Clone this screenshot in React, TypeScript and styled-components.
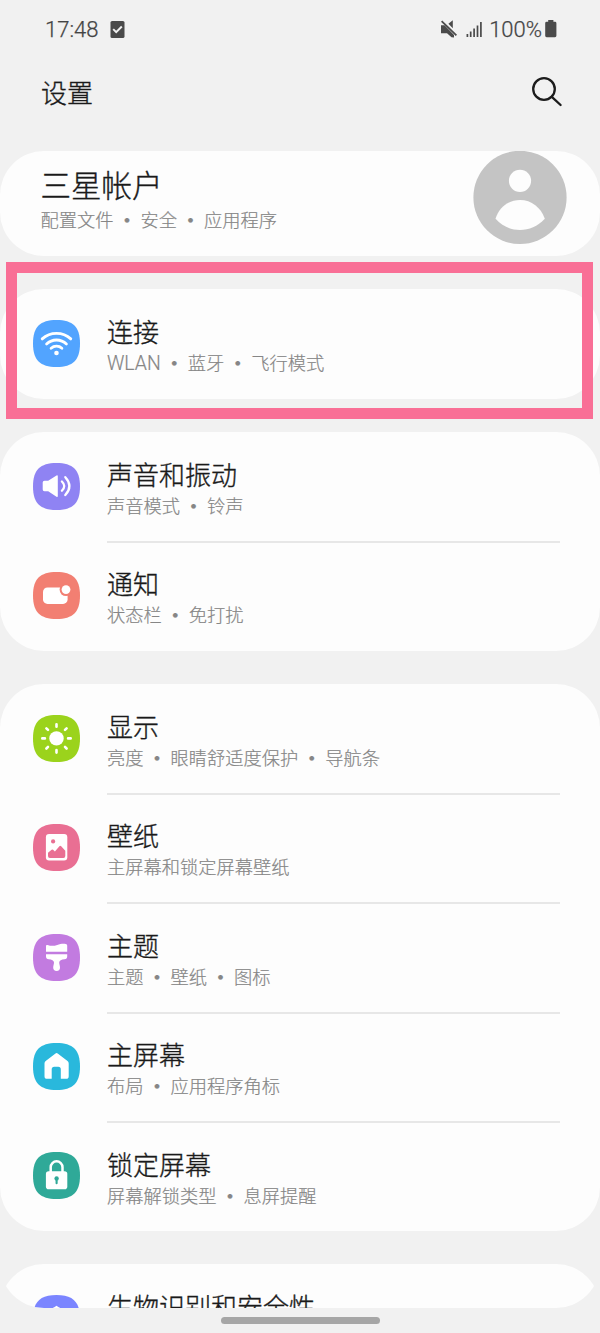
import React from "react";
import styled, { createGlobalStyle } from "styled-components";

const GlobalStyle = createGlobalStyle`
  * { box-sizing: border-box; }
  html, body { margin: 0; padding: 0; background: #f1f1f1; }
  body { font-family: Roboto, "Noto Sans CJK SC", sans-serif; font-weight: 300; overflow: hidden; }
  svg { display: block; }
`;

const Screen = styled.div`
  position: relative;
  display: flex;
  flex-direction: column;
  width: 600px;
  height: 1333px;
  background: #f1f1f1;
  overflow: hidden;
`;

const StatusBar = styled.div`
  display: flex;
  align-items: center;
  justify-content: space-between;
  height: 60px;
  padding: 0 42px 0 45px;
  color: #444;
  font-size: 22px;
  line-height: 26px;
  -webkit-text-stroke: 0.25px currentColor;
`;

const StatusGroup = styled.div<{ $gap: number }>`
  display: flex;
  align-items: center;
  gap: ${(p) => p.$gap}px;
`;

const Header = styled.header`
  display: flex;
  align-items: center;
  justify-content: space-between;
  height: 66px;
  margin-bottom: 25.3px;
  padding: 0 37px 0 41px;
`;

const PageTitle = styled.h1`
  margin: 2px 0 0;
  font-size: 26px;
  line-height: 38px;
  font-weight: inherit;
  color: #1a1a1a;
  -webkit-text-stroke: 0.35px currentColor;
`;

const SearchIcon = styled.svg`
  width: 32px;
  height: 32px;
  margin-top: -2px;
`;

const Viewport = styled.main`
  display: flex;
  flex-direction: column;
  gap: 33.3px;
  height: 1156.7px;
  border-radius: 0 0 44px 44px;
  overflow: hidden;
`;

const Card = styled.section`
  flex: none;
  border-radius: 44px;
  background: #fdfdfd;
`;

const AccountCard = styled(Card)`
  display: flex;
  align-items: flex-start;
  justify-content: space-between;
  height: 104.7px;
  padding: 0 33px 0 40.5px;
`;

const AccountText = styled.div`
  padding-top: 15.5px;
`;

const AccountTitle = styled.div`
  margin-bottom: 2px;
  font-size: 30.5px;
  line-height: 39px;
  color: #1a1a1a;
  -webkit-text-stroke: 0.35px currentColor;
`;

const Row = styled.div`
  display: flex;
  height: 109.4px;
  padding: 0 40px 0 33.4px;
  gap: 26.6px;
`;

const RowIcon = styled.svg`
  flex: none;
  width: 47px;
  height: 47px;
  margin-top: 30.8px;
`;

const RowText = styled.div<{ $divided: boolean }>`
  flex: 1;
  height: 111px;
  padding-top: 26px;
  border-bottom: ${(p) => (p.$divided ? "2px solid #e7e7e7" : "none")};
`;

const RowTitle = styled.div`
  font-size: 26px;
  line-height: 36px;
  color: #1a1a1a;
  white-space: nowrap;
  -webkit-text-stroke: 0.35px currentColor;
`;

const Summary = styled.div<{ $single: boolean }>`
  display: flex;
  align-items: baseline;
  margin-top: ${(p) => (p.$single ? 0 : -1)}px;
  font-size: 18.25px;
  line-height: 25px;
  color: #868686;
  white-space: nowrap;
  -webkit-text-stroke: 0.2px currentColor;
`;

const Latin = styled.span`
  font-size: 19.4px;
`;

const Dot = styled.span`
  width: 27px;
  text-align: center;
  font-family: "Noto Sans CJK SC", sans-serif;
  font-weight: 700;
  font-size: 18px;
`;

const Highlight = styled.div`
  position: absolute;
  left: 6px;
  top: 262px;
  width: 587px;
  height: 157px;
  border: 11px solid #f96f96;
`;

const NavArea = styled.footer`
  display: flex;
  justify-content: center;
  padding-top: 9px;
`;

const NavHandle = styled.div`
  width: 159px;
  height: 7px;
  border-radius: 4px;
  background: #a6a6a6;
`;

function SummaryLine({ parts }: { parts: string[] }) {
  return (
    <Summary $single={parts.length === 1}>
      {parts.map((part, i) => (
        <React.Fragment key={part}>
          {i > 0 && <Dot>•</Dot>}
          {/^[A-Z]+$/.test(part) ? <Latin>{part}</Latin> : <span>{part}</span>}
        </React.Fragment>
      ))}
    </Summary>
  );
}

interface Item {
  title: string;
  parts: string[];
  color: string;
  glyph: React.ReactNode;
}

const connection: Item = {
  title: "连接",
  parts: ["WLAN", "蓝牙", "飞行模式"],
  color: "#52a4ff",
  glyph: (
    <>
      <g fill="none" stroke="#fff" strokeWidth="2.8" strokeLinecap="round">
        <path d="M9.2 18.9A21 21 0 0 1 37.8 18.9" />
        <path d="M13.6 24.1A14 14 0 0 1 33.4 24.1" />
        <path d="M18.1 28.3A8 8 0 0 1 28.9 28.3" />
      </g>
      <circle cx="23.5" cy="33" r="2.3" fill="#fff" />
    </>
  ),
};

const sound: Item = {
  title: "声音和振动",
  parts: ["声音模式", "铃声"],
  color: "#8f83f3",
  glyph: (
    <>
      <path d="M11.5 17.8H15.2L23.5 12.4Q24.8 11.8 24.8 13.2V33Q24.8 34.3 23.5 33.7L15.2 28.2H11.5Q9.7 28.2 9.7 26.4V19.6Q9.7 17.8 11.5 17.8Z" fill="#fff" />
      <g fill="none" stroke="#fff" strokeWidth="2.3" strokeLinecap="round">
        <path d="M28.9 18.5Q33.6 23 28.9 27.8" />
        <path d="M32.3 14.2Q40.5 23 32.3 32.1" />
      </g>
    </>
  ),
};

const notifications: Item = {
  title: "通知",
  parts: ["状态栏", "免打扰"],
  color: "#f27f72",
  glyph: (
    <>
      <rect x="10" y="15.5" width="24.6" height="16.4" rx="4.5" fill="#fff" />
      <circle cx="33" cy="17.6" r="6.4" fill="#f27f72" />
      <circle cx="33" cy="17.6" r="4.4" fill="#fff" />
    </>
  ),
};

const display: Item = {
  title: "显示",
  parts: ["亮度", "眼睛舒适度保护", "导航条"],
  color: "#9bd31c",
  glyph: (
    <>
      <circle cx="23.5" cy="23.4" r="7.2" fill="#fff" />
      <path
        d="M23.5 9.2V11.8M23.5 35V37.6M9.3 23.4H11.9M35.1 23.4H37.7M13.4 13.3L15 14.9M32 31.9L33.6 33.5M33.6 13.3L32 14.9M15 31.9L13.4 33.5"
        stroke="#fff"
        strokeWidth="2.6"
        strokeLinecap="round"
      />
    </>
  ),
};

const wallpaper: Item = {
  title: "壁纸",
  parts: ["主屏幕和锁定屏幕壁纸"],
  color: "#e96f93",
  glyph: (
    <>
      <rect x="12.9" y="10.1" width="21.4" height="26.4" rx="3.2" fill="#fff" />
      <circle cx="20.1" cy="17.4" r="2.1" fill="#e96f93" />
      <path d="M15 28.8L18.6 25.7Q19.4 25.1 20.1 25.8L21.9 27.4L26.4 22.2Q27.3 21.3 28.2 22.2L32.3 26.8V32Q32.3 33.9 30.4 33.9H16.9Q15 33.9 15 32Z" fill="#e96f93" />
    </>
  ),
};

const themes: Item = {
  title: "主题",
  parts: ["主题", "壁纸", "图标"],
  color: "#c27be0",
  glyph: (
    <path
      d="M13 12Q13 10.6 14.5 11C18 12.2 21 12.1 24.2 11C27.4 9.8 30.2 9.6 32.8 10Q34.2 10.2 34.2 11.6V17.8H13ZM13 20.2H34.2V22.5Q34.2 25 31.5 25.2C28.5 25.4 26.2 26.4 26.2 28.4C26.2 30.2 27 31.8 27 33.5A3.4 3.4 0 0 1 20.2 33.5C20.2 31.8 21 30.2 21 28.4C21 26.4 18.7 25.4 15.7 25.2Q13 25 13 22.5Z"
      fill="#fff"
    />
  ),
};

const home: Item = {
  title: "主屏幕",
  parts: ["布局", "应用程序角标"],
  color: "#29b8dc",
  glyph: (
    <path
      d="M22.5 10.5Q23.6 9.7 24.7 10.5L34.5 18Q35.7 18.9 35.7 20.4V33.2Q35.7 35.8 33.1 35.8H27.8V26.2Q27.8 23.7 25.3 23.7H21.2Q18.7 23.7 18.7 26.2V35.8H14.1Q11.5 35.8 11.5 33.2V20.4Q11.5 18.9 12.7 18Z"
      fill="#fff"
    />
  ),
};

const lockScreen: Item = {
  title: "锁定屏幕",
  parts: ["屏幕解锁类型", "息屏提醒"],
  color: "#2fa998",
  glyph: (
    <>
      <path d="M17.7 20V15.2A5.9 5.9 0 0 1 29.5 15.2V20" fill="none" stroke="#fff" strokeWidth="2.5" />
      <rect x="12.9" y="19.3" width="21.4" height="17.9" rx="2.8" fill="#fff" />
      <circle cx="23.6" cy="26.4" r="2.2" fill="#2fa998" />
      <path d="M23.6 27V31.2" stroke="#2fa998" strokeWidth="2.1" strokeLinecap="round" />
    </>
  ),
};

const biometrics: Item = {
  title: "生物识别和安全性",
  parts: [],
  color: "#7b85ff",
  glyph: (
    <path d="M23.5 10.8Q28 14.2 34.2 14.5V23Q34.2 32 23.5 37Q12.8 32 12.8 23V14.5Q19 14.2 23.5 10.8Z" fill="#fff" />
  ),
};

const groups: Item[][] = [
  [connection],
  [sound, notifications],
  [display, wallpaper, themes, home, lockScreen],
  [biometrics],
];

function SettingRow({ item, divided }: { item: Item; divided: boolean }) {
  return (
    <Row>
      <RowIcon viewBox="0 0 47 47">
        <path d="M23.5 0C40 0 47 7 47 23.5S40 47 23.5 47 0 40 0 23.5 7 0 23.5 0Z" fill={item.color} />
        {item.glyph}
      </RowIcon>
      <RowText $divided={divided}>
        <RowTitle>{item.title}</RowTitle>
        <SummaryLine parts={item.parts} />
      </RowText>
    </Row>
  );
}

export default function App() {
  return (
    <Screen>
      <GlobalStyle />
      <StatusBar>
        <StatusGroup $gap={12}>
          <span>17:48</span>
          <svg width="15" height="18" viewBox="0 0 15 18">
            <rect x="0.5" y="0" width="14" height="17" rx="1.6" fill="#4a4a4a" />
            <path d="M3.2 8.1L6.2 11.1L11.8 5.5" fill="none" stroke="#f1f1f1" strokeWidth="2" />
          </svg>
        </StatusGroup>
        <StatusGroup $gap={0}>
          <svg width="49" height="20" viewBox="0 0 49 20">
            <path d="M1 5.2H4.5L14 15V17.6L11.5 17.2L7 13.2H1ZM8.4 3.8L12.8 0.2V8.2Z" fill="#4a4a4a" />
            <path d="M1.6 1.2L16.4 15.4" stroke="#4a4a4a" strokeWidth="1.8" />
            <path d="M27.4 14V17M30.7 11.4V17M34.1 8.4V17M37.5 5.4V17M40.9 2V17" stroke="#4a4a4a" strokeWidth="1.7" />
          </svg>
          <span>100%</span>
          <svg width="16" height="20" viewBox="0 0 16 20">
            <path d="M6.2 0H11.4V1.8H13Q14.4 1.8 14.4 3.2V15.8Q14.4 17.2 13 17.2H4.6Q3.2 17.2 3.2 15.8V3.2Q3.2 1.8 4.6 1.8H6.2Z" fill="#4a4a4a" />
          </svg>
        </StatusGroup>
      </StatusBar>
      <Header>
        <PageTitle>设置</PageTitle>
        <SearchIcon viewBox="0 0 32 32" fill="none" stroke="#1c1c1c" strokeWidth="2.3" strokeLinecap="round">
          <circle cx="13" cy="13" r="10.8" />
          <path d="M20.8 20.8L29.6 29" />
        </SearchIcon>
      </Header>
      <Viewport>
        <AccountCard>
          <AccountText>
            <AccountTitle>三星帐户</AccountTitle>
            <SummaryLine parts={["配置文件", "安全", "应用程序"]} />
          </AccountText>
          <svg width="94" height="93" viewBox="0 0 94 93">
            <circle cx="47" cy="46.4" r="46.6" fill="#c4c4c4" />
            <circle cx="47" cy="29.8" r="11.1" fill="#fdfdfd" />
            <path d="M22.5 67.8C26 56.5 35.5 49 47 49S68 56.5 71.8 67.8C64.5 75.6 56 79 47 79S29.5 75.6 22.5 67.8Z" fill="#fdfdfd" />
          </svg>
        </AccountCard>
        {groups.map((items, g) => (
          <Card key={g}>
            {items.map((item, i) => (
              <SettingRow key={item.title} item={item} divided={i < items.length - 1} />
            ))}
          </Card>
        ))}
      </Viewport>
      <NavArea>
        <NavHandle />
      </NavArea>
      <Highlight />
    </Screen>
  );
}
